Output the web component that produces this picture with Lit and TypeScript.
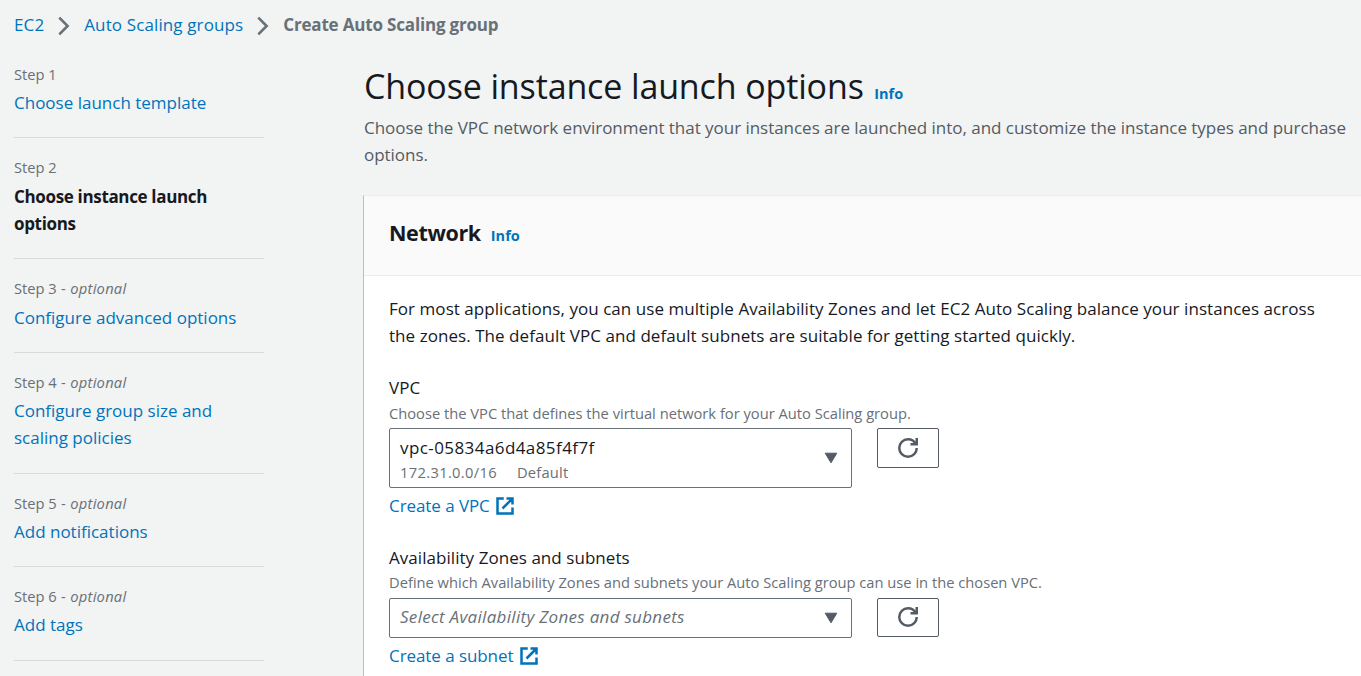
import { LitElement, html, css, svg, nothing } from "lit";
import { customElement } from "lit/decorators.js";
import { classMap } from "lit/directives/class-map.js";

interface Step {
  title: string;
  optional?: boolean;
  active?: boolean;
}

const STEPS: Step[] = [
  { title: "Choose launch template" },
  { title: "Choose instance launch options", active: true },
  { title: "Configure advanced options", optional: true },
  { title: "Configure group size and scaling policies", optional: true },
  { title: "Add notifications", optional: true },
  { title: "Add tags", optional: true },
];

const chevron = html`<svg class="chevron" width="12" height="20" viewBox="0 0 12 20">
  ${svg`<path d="M1.3 1.6 L9.6 10 L1.3 18.4" fill="none" stroke="#687078" stroke-width="2.6" />`}
</svg>`;

const caret = html`<svg class="caret" width="14" height="12" viewBox="0 0 14 12">
  ${svg`<path d="M1.2 1.2 H12.8 L7 10.8 Z" fill="#545b64" stroke="#545b64" stroke-width="1" stroke-linejoin="round" />`}
</svg>`;

const refresh = html`<svg width="20" height="20" viewBox="0 0 16 16">
  ${svg`<path d="M15 8c0 3.9-3.1 7-7 7s-7-3.1-7-7 3.1-7 7-7c2.8 0 5.2 1.6 6.3 4" fill="none" stroke="#545b64" stroke-width="2" />
  <path d="M10 5h5V0" fill="none" stroke="#545b64" stroke-width="2" />`}
</svg>`;

const external = html`<svg class="external" width="20" height="20" viewBox="0 0 16 16">
  ${svg`<path d="M7 2H2v12h12V9.2M9.2 2H14v4.8M6 10l7.6-7.6" fill="none" stroke="#0073bb" stroke-width="2" />`}
</svg>`;

@customElement("app-root")
export class AppRoot extends LitElement {
  static styles = css`
    :host {
      display: block;
      height: 676px;
      overflow: hidden;
      background: #f2f3f3;
      color: #16191f;
      font: 17px/27.3px "Open Sans", "Noto Sans", sans-serif;
    }
    * { box-sizing: border-box; }
    h1, h2, p, ol { margin: 0; padding: 0; }
    a { color: #0073bb; text-decoration: none; }
    svg { display: block; flex: none; }
    .crumbs {
      display: flex;
      align-items: center;
      height: 45px;
      padding: 5px 0 0 14px;
    }
    .crumbs a { letter-spacing: 0.12px; }
    .chevron { margin: 2px 14.3px 0 13.7px; }
    .current { color: #687078; font-weight: 700; letter-spacing: -0.18px; }
    .page { display: grid; grid-template-columns: 250px 1fr; column-gap: 99px; padding-left: 14px; }
    .steps { list-style: none; }
    .step { padding: 17px 0 20.8px; border-bottom: 1px solid #d5dbdb; }
    .num {
      font-size: 14.7px;
      line-height: 25px;
      color: #687078;
      margin-bottom: 2.15px;
    }
    .num i { letter-spacing: 0.25px; }
    .num .dash { letter-spacing: 0.4px; }
    .name { line-height: 27.5px; padding-right: 40px; }
    .wide { padding-right: 0; }
    .active { font-weight: 700; letter-spacing: -0.34px; }
    .main { padding-top: 19px; min-width: 0; }
    .title {
      display: flex;
      align-items: baseline;
      gap: 10.5px;
      height: 44px;
      padding-left: 1px;
      font-size: 34px;
      line-height: 44px;
      font-weight: 400;
      letter-spacing: -0.13px;
    }
    .info { font-size: 14.5px; font-weight: 700; line-height: 20px; letter-spacing: 0; }
    .desc { color: #545b64; margin: 5.5px 0 27px; padding: 0 12px 0 1px; letter-spacing: -0.03px; }
    .card { background: #fff; border-top: 1px solid #eaeded; border-left: 1px solid #b9bfbf; height: 520px; }
    .head {
      display: flex;
      align-items: baseline;
      gap: 10px;
      height: 80px;
      padding: 22px 25px 0;
      background: #fafafa;
      border-bottom: 1px solid #eaeded;
    }
    .head h2 { font-size: 21.5px; line-height: 30px; letter-spacing: -0.36px; }
    .body { padding: 19.3px 40px 0 25px; }
    .intro { line-height: 27px; letter-spacing: 0.05px; margin-bottom: 26px; }
    .field { margin-bottom: 25.15px; }
    .label { line-height: 26.6px; letter-spacing: 0.05px; }
    .help { font-size: 14.7px; line-height: 20px; color: #687078; margin: 0.6px 0 5.5px; }
    .row { display: flex; align-items: flex-start; gap: 25px; }
    .select {
      display: flex;
      align-items: center;
      justify-content: space-between;
      width: 463px;
      height: 60px;
      padding: 0 13px 0 10px;
      border: 1px solid #687078;
      border-radius: 2px;
      background: #fff;
    }
    .short { height: 40px; }
    .value { line-height: 27px; letter-spacing: 0.42px; }
    .meta { display: flex; gap: 20px; font-size: 14.7px; line-height: 22px; color: #687078; letter-spacing: 0.2px; }
    .cidr { letter-spacing: 0.34px; }
    .placeholder { font-style: italic; color: #687078; letter-spacing: 0.3px; margin-bottom: 2px; }
    .btn {
      display: flex;
      align-items: center;
      justify-content: center;
      width: 62px;
      height: 40px;
      padding: 0;
      border: 1px solid #545b64;
      border-radius: 2px;
      background: #fff;
    }
    .low { height: 39px; }
    .link { display: flex; align-items: center; gap: 5.5px; line-height: 27.5px; margin-top: 4.2px; letter-spacing: -0.07px; }
  `;

  private renderStep(step: Step, index: number) {
    return html`<li class="step">
      <div class="num">Step ${index + 1}${step.optional ? html`<span class="dash"> - </span><i>optional</i>` : nothing}</div>
      <div class=${classMap({ name: true, active: !!step.active, wide: index === 2 })}>
        ${step.active ? step.title : html`<a>${step.title}</a>`}
      </div>
    </li>`;
  }

  render() {
    return html`
      <nav class="crumbs">
        <a>EC2</a>${chevron}<a>Auto Scaling groups</a>${chevron}<span class="current">Create Auto Scaling group</span>
      </nav>
      <div class="page">
        <ol class="steps">${STEPS.map((s, i) => this.renderStep(s, i))}</ol>
        <main class="main">
          <h1 class="title">Choose instance launch options<a class="info">Info</a></h1>
          <p class="desc">Choose the VPC network environment that your instances are launched into, and customize the instance types and purchase options.</p>
          <section class="card">
            <header class="head"><h2>Network</h2><a class="info">Info</a></header>
            <div class="body">
              <p class="intro">For most applications, you can use multiple Availability Zones and let EC2 Auto Scaling balance your instances across the zones. The default VPC and default subnets are suitable for getting started quickly.</p>
              <div class="field">
                <div class="label">VPC</div>
                <div class="help">Choose the VPC that defines the virtual network for your Auto Scaling group.</div>
                <div class="row">
                  <div class="select">
                    <div>
                      <div class="value">vpc-05834a6d4a85f4f7f</div>
                      <div class="meta"><span class="cidr">172.31.0.0/16</span><span>Default</span></div>
                    </div>
                    ${caret}
                  </div>
                  <button class="btn" aria-label="Refresh">${refresh}</button>
                </div>
                <a class="link">Create a VPC${external}</a>
              </div>
              <div class="field">
                <div class="label">Availability Zones and subnets</div>
                <div class="help">Define which Availability Zones and subnets your Auto Scaling group can use in the chosen VPC.</div>
                <div class="row">
                  <div class="select short"><span class="placeholder">Select Availability Zones and subnets</span>${caret}</div>
                  <button class="btn low" aria-label="Refresh">${refresh}</button>
                </div>
                <a class="link">Create a subnet${external}</a>
              </div>
            </div>
          </section>
        </main>
      </div>
    `;
  }
}
